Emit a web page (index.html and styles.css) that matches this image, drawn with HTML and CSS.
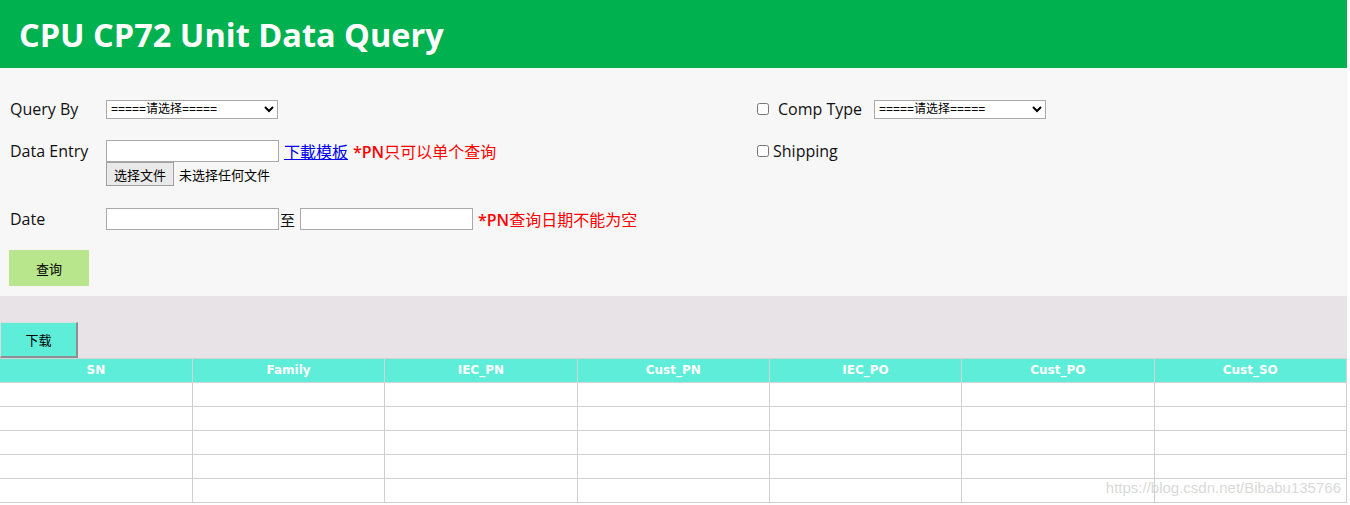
FILE: index.html
```html
<!DOCTYPE html>
<html lang="zh">

<head>
	<meta charset="UTF-8">
	<title>CPU CP72 Unit Data Query</title>
	<link rel="stylesheet" href="styles.css">
</head>

<body>
	<div class="page_header">
		<h1 class="page_title">CPU CP72 Unit Data Query</h1>
	</div>

	<div class="query_panel">
		<div class="query_top">
			<div class="query_left">
				<div class="query_row row_first">
					<label class="query_label">Query By</label>
					<select class="query_select">
						<option>=====请选择=====</option>
					</select>
				</div>
				<div class="query_row row_entry">
					<label class="query_label">Data Entry</label>
					<div class="entry_block">
						<div class="entry_line">
							<input type="text" class="query_input">
							<a href="#" class="template_link">下載模板</a>
							<span class="query_hint"><b>*PN</b>只可以单个查询</span>
						</div>
						<div class="file_line">
							<button class="file_button">选择文件</button>
							<span class="file_name">未选择任何文件</span>
						</div>
					</div>
				</div>
			</div>
			<div class="query_right">
				<div class="query_row row_first">
					<input type="checkbox" class="query_check">
					<label class="check_label spaced">Comp Type</label>
					<select class="query_select">
						<option>=====请选择=====</option>
					</select>
				</div>
				<div class="query_row row_ship">
					<input type="checkbox" class="query_check">
					<label class="check_label">Shipping</label>
				</div>
			</div>
		</div>

		<div class="query_row row_date">
			<label class="query_label">Date</label>
			<input type="text" class="query_input">
			<span class="date_sep">至</span>
			<input type="text" class="query_input">
			<span class="query_hint date_hint"><b>*PN</b>查询日期不能为空</span>
		</div>

		<button class="search_button">查询</button>
	</div>

	<div class="result_panel">
		<button class="download_button">下载</button>
		<table class="result_table">
			<thead>
				<tr>
					<th>SN</th>
					<th>Family</th>
					<th>IEC_PN</th>
					<th>Cust_PN</th>
					<th>IEC_PO</th>
					<th>Cust_PO</th>
					<th>Cust_SO</th>
				</tr>
			</thead>
			<tbody>
				<tr><td></td><td></td><td></td><td></td><td></td><td></td><td></td></tr>
				<tr><td></td><td></td><td></td><td></td><td></td><td></td><td></td></tr>
				<tr><td></td><td></td><td></td><td></td><td></td><td></td><td></td></tr>
				<tr><td></td><td></td><td></td><td></td><td></td><td></td><td></td></tr>
				<tr><td></td><td></td><td></td><td></td><td></td><td></td><td></td></tr>
			</tbody>
		</table>
		<span class="watermark">https://blog.csdn.net/Bibabu135766</span>
	</div>
</body>

</html>
```

FILE: styles.css
```css
* {
	font-family: "Open Sans", "Noto Sans CJK SC", sans-serif;
	box-sizing: border-box;
}

body {
	margin: 0;
	width: 1347px;
	background-color: white;
}

.page_header {
	background-color: #00b150;
	height: 68px;
	display: flex;
	align-items: center;
	padding-left: 19px;
}

.page_title {
	margin: 0;
	color: white;
	font-size: 32.5px;
	font-weight: bold;
}

.query_panel {
	background-color: #f7f7f7;
	padding: 31px 0 10px 10px;
	height: 228px;
}

.query_top {
	display: flex;
}

.query_left {
	width: 747px;
}

.query_row {
	display: flex;
	align-items: center;
	font-size: 16px;
	color: #111;
}

.row_first {
	height: 20px;
	margin-bottom: 21px;
}

.row_entry {
	align-items: flex-start;
}

.row_ship {
	height: 22px;
}

.query_label {
	width: 96px;
	flex-shrink: 0;
}

.row_entry .query_label {
	line-height: 22px;
}

.query_select {
	width: 172px;
	height: 19px;
	font-size: 12px;
	font-family: "Liberation Sans", "Noto Sans CJK SC", sans-serif;
	border: 1px solid #a9a9a9;
	background-color: white;
	padding: 0;
	border-radius: 0;
}

.query_input {
	width: 173px;
	height: 22px;
	border: 1px solid #a9a9a9;
	background-color: white;
	margin: 0;
}

.entry_line {
	display: flex;
	align-items: center;
	height: 22px;
}

.template_link {
	color: #0000ee;
	margin-left: 5px;
	font-family: "Noto Sans CJK SC", sans-serif;
	font-size: 16px;
}

.query_hint {
	color: red;
	margin-left: 5px;
	font-size: 16px;
	font-family: "Noto Sans CJK SC", sans-serif;
}

.query_hint b {
	font-family: "Open Sans", sans-serif;
	font-weight: 600;
}

.file_line {
	display: flex;
	align-items: center;
	height: 24px;
}

.file_button {
	height: 24px;
	width: 68px;
	font-size: 13px;
	padding: 0;
	border: 1px solid #a0a0a0;
	background-color: #e9e9e9;
	color: black;
	border-radius: 0;
}

.file_name {
	margin-left: 5px;
	font-size: 13px;
	color: black;
}

.query_check {
	margin: 0;
	width: 12px;
	height: 12px;
}

.check_label {
	margin-left: 4px;
}

.check_label.spaced {
	margin-left: 9px;
	margin-right: 12px;
}

.row_date {
	margin-top: 22px;
	height: 22px;
}

.date_sep {
	width: 21px;
	font-size: 15px;
	text-align: left;
	padding-left: 1px;
	font-family: "Noto Sans CJK SC", sans-serif;
}

.date_hint {
	margin-left: 5px;
}

.search_button {
	display: block;
	margin-top: 20px;
	margin-left: -1px;
	width: 80px;
	height: 36px;
	border: 0;
	background-color: #b8e68c;
	font-size: 13px;
	color: black;
	cursor: pointer;
}

.result_panel {
	position: relative;
	background-color: #e8e3e6;
	padding-top: 26px;
}

.download_button {
	display: block;
	width: 78px;
	height: 36px;
	background-color: #5eedd8;
	border-style: solid;
	border-width: 1px 2px 2px 1px;
	border-color: #dcdcdc #8f8f8f #8f8f8f #dcdcdc;
	font-size: 13px;
	color: black;
	padding: 0;
}

.result_table {
	width: 1347px;
	border-collapse: collapse;
	table-layout: fixed;
	background-color: white;
}

.result_table th {
	background-color: #5eedd8;
	color: white;
	font-size: 12px;
	font-family: "DejaVu Sans", sans-serif;
	font-weight: bold;
	height: 24px;
	border: 1px solid #d4d4d4;
	border-left-width: 0;
	padding: 0 0 1px 0;
}

.result_table td {
	height: 24px;
	border: 1px solid #cfcfcf;
	border-left-width: 0;
	padding: 0;
}

.result_table td:first-child,
.result_table th:first-child {
	border-left: 0;
}

.watermark {
	position: absolute;
	right: 6px;
	bottom: 7px;
	font-family: "Liberation Sans", sans-serif;
	font-size: 15px;
	color: rgba(200, 200, 200, 0.7);
}
```
